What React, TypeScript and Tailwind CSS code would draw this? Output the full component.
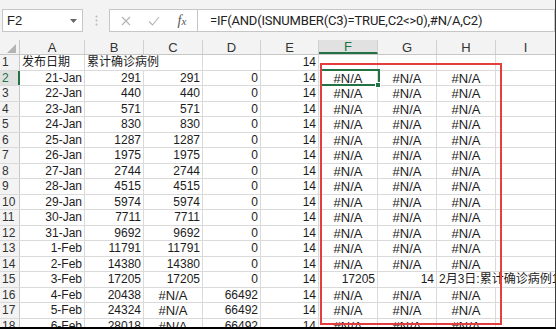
import React from 'react';

type Align = 'l' | 'r' | 'c';
type Cell = { v: string; a?: Align; kind?: 'num' | 'na' | 'cjk' | 'mix'; spill?: boolean };

const colW = ['w-[65px]', 'w-[59px]', 'w-[59px]', 'w-[58px]', 'w-[58px]', 'w-[59px]', 'w-[59px]', 'w-[59px]', 'flex-1'];
const colNames = ['A', 'B', 'C', 'D', 'E', 'F', 'G', 'H', 'I'];

const dates = ['21-Jan', '22-Jan', '23-Jan', '24-Jan', '25-Jan', '26-Jan', '27-Jan', '28-Jan', '29-Jan', '30-Jan', '31-Jan', '1-Feb', '2-Feb', '3-Feb', '4-Feb', '5-Feb', '6-Feb'];
const cum = [291, 440, 571, 830, 1287, 1975, 2744, 4515, 5974, 7711, 9692, 11791, 14380, 17205, 20438, 24324, 28018];

const num = (v: string | number): Cell => ({ v: String(v), a: 'r', kind: 'num' });
const na = (): Cell => ({ v: '#N/A', a: 'c', kind: 'na' });
const empty = (): Cell => ({ v: '' });

function buildRows(): Cell[][] {
  const rows: Cell[][] = [];
  rows.push([
    { v: '发布日期', a: 'l', kind: 'cjk' },
    { v: '累计确诊病例', a: 'l', kind: 'cjk', spill: true },
    empty(),
    empty(),
    num(14),
    empty(),
    empty(),
    empty(),
    empty(),
  ]);
  dates.forEach((d, i) => {
    const late = i >= 14;
    const row: Cell[] = [
      num(d),
      num(cum[i]),
      late ? na() : num(cum[i]),
      num(late ? 66492 : 0),
      num(14),
    ];
    if (i === 13) {
      row.push(num(17205), num(14), { v: '2月3日:累计确诊病例17205', a: 'l', kind: 'mix', spill: true }, empty());
    } else {
      row.push(na(), na(), na(), empty());
    }
    rows.push(row);
  });
  return rows;
}

const rows = buildRows();

function CellView({ c, w, last }: { c: Cell; w: string; last: boolean }) {
  const align = c.a === 'r' ? 'justify-end' : c.a === 'c' ? 'justify-center' : 'justify-start';
  const font = c.kind === 'na' ? 'text-[13px]' : 'text-[12px]';
  const edge = c.spill ? 'overflow-visible z-10' : last ? 'overflow-hidden' : 'overflow-hidden border-r border-[#dadada]';
  return (
    <div className={`${w} shrink-0 h-full flex items-start ${align} px-[2px] whitespace-nowrap leading-[15px] text-[#1c1c1c] ${font} ${edge}`}>
      {c.v}
    </div>
  );
}

function FormulaBar() {
  return (
    <div className="h-[40px] shrink-0 bg-[#f3f3f3] flex items-start pt-[9px] pl-[2px]">
      <div className="w-[81px] h-[23px] bg-white border border-[#c6c6c6] flex items-center justify-between pl-[4px] pr-[5px]">
        <span className="text-[13px] text-[#222]">F2</span>
        <svg width="7" height="4" viewBox="0 0 7 4">
          <path d="M0 0 L7 0 L3.5 4 Z" fill="#666" />
        </svg>
      </div>
      <div className="w-[26px] h-[23px] flex items-center justify-center">
        <svg width="3" height="11" viewBox="0 0 3 11">
          <circle cx="1.5" cy="1.5" r="1" fill="#b9b9b9" />
          <circle cx="1.5" cy="5.5" r="1" fill="#b9b9b9" />
          <circle cx="1.5" cy="9.5" r="1" fill="#b9b9b9" />
        </svg>
      </div>
      <div className="w-[89px] h-[23px] bg-white border border-[#c6c6c6] flex items-center">
        <div className="w-[30px] flex justify-center pl-[2px]">
          <svg width="10" height="10" viewBox="0 0 10 10">
            <path d="M1 1 L9 9 M9 1 L1 9" stroke="#b3b3b3" strokeWidth="1.1" />
          </svg>
        </div>
        <div className="w-[28px] flex justify-center">
          <svg width="12" height="10" viewBox="0 0 12 10">
            <path d="M1 5.5 L4.5 9 L11 1" stroke="#b3b3b3" strokeWidth="1.1" fill="none" />
          </svg>
        </div>
        <div className="w-[28px] flex justify-center">
          <span className="italic text-[14px] text-[#555]" style={{ fontFamily: '"Liberation Serif", serif' }}>
            f<span className="text-[11px]">x</span>
          </span>
        </div>
      </div>
      <div className="flex-1 h-[23px] bg-white border border-l-0 border-[#c6c6c6] flex items-center pl-[12px] whitespace-nowrap overflow-hidden">
        <span className="text-[13px] text-[#222] tracking-[-0.2px]" style={{ fontFamily: 'Roboto, sans-serif' }}>
          =IF(AND(ISNUMBER(C3)=TRUE,C2&lt;&gt;0),#N/A,C2)
        </span>
      </div>
    </div>
  );
}

function HeaderRow() {
  return (
    <div className="h-[15px] shrink-0 flex bg-[#f3f3f3] border-b border-[#c6c6c6]">
      <div className="w-[20px] shrink-0 h-full border-r border-[#c6c6c6] flex items-end justify-end pr-[3px] pb-[1px]">
        <svg width="9" height="9" viewBox="0 0 9 9">
          <path d="M9 0 L9 9 L0 9 Z" fill="#b4b4b4" />
        </svg>
      </div>
      {colNames.map((n, i) => {
        const sel = n === 'F';
        return (
          <div
            key={n}
            className={`${colW[i]} shrink-0 h-full flex items-center justify-center text-[13px] leading-[15px] ${
              i === colNames.length - 1 ? '' : 'border-r border-[#d0d0d0]'
            } ${sel ? 'bg-[#e1e1e1] text-[#217346] border-b-2 border-b-[#217346]' : 'text-[#333]'}`}
          >
            {n}
          </div>
        );
      })}
    </div>
  );
}

export default function App() {
  return (
    <div
      className="w-[556px] h-[329px] bg-white border-r border-[#3a3a3a] border-b-2 border-b-black overflow-hidden flex flex-col relative"
      style={{ fontFamily: '"Liberation Sans", "Noto Sans CJK SC", sans-serif' }}
    >
      <FormulaBar />
      <HeaderRow />
      <div className="flex-1 overflow-hidden relative">
        {rows.map((r, ri) => {
          const sel = ri === 1;
          return (
            <div key={ri} className="h-[15.5px] flex border-b border-[#dadada]">
              <div
                className={`w-[20px] shrink-0 h-full flex items-start pl-[2px] text-[12px] leading-[15px] ${
                  sel
                    ? 'bg-[#e1e1e1] text-[#217346] border-r-2 border-r-[#217346]'
                    : 'bg-[#f3f3f3] text-[#333] border-r border-[#c6c6c6]'
                }`}
              >
                {ri + 1}
              </div>
              {r.map((c, ci) => (
                <CellView key={ci} c={c} w={colW[ci]} last={ci === r.length - 1} />
              ))}
            </div>
          );
        })}

        {/* selected cell F2 */}
        <div className="absolute left-[320px] top-[14px] w-[60px] h-[17px] border-2 border-[#217346]" />
        <div className="absolute left-[375px] top-[27px] w-[6px] h-[6px] bg-[#217346] border border-white" />

        {/* red highlight box */}
        <div className="absolute left-[320px] top-[8px] w-[182px] h-[262px] border-2 border-[#e33d3d] z-20" />
      </div>
    </div>
  );
}
